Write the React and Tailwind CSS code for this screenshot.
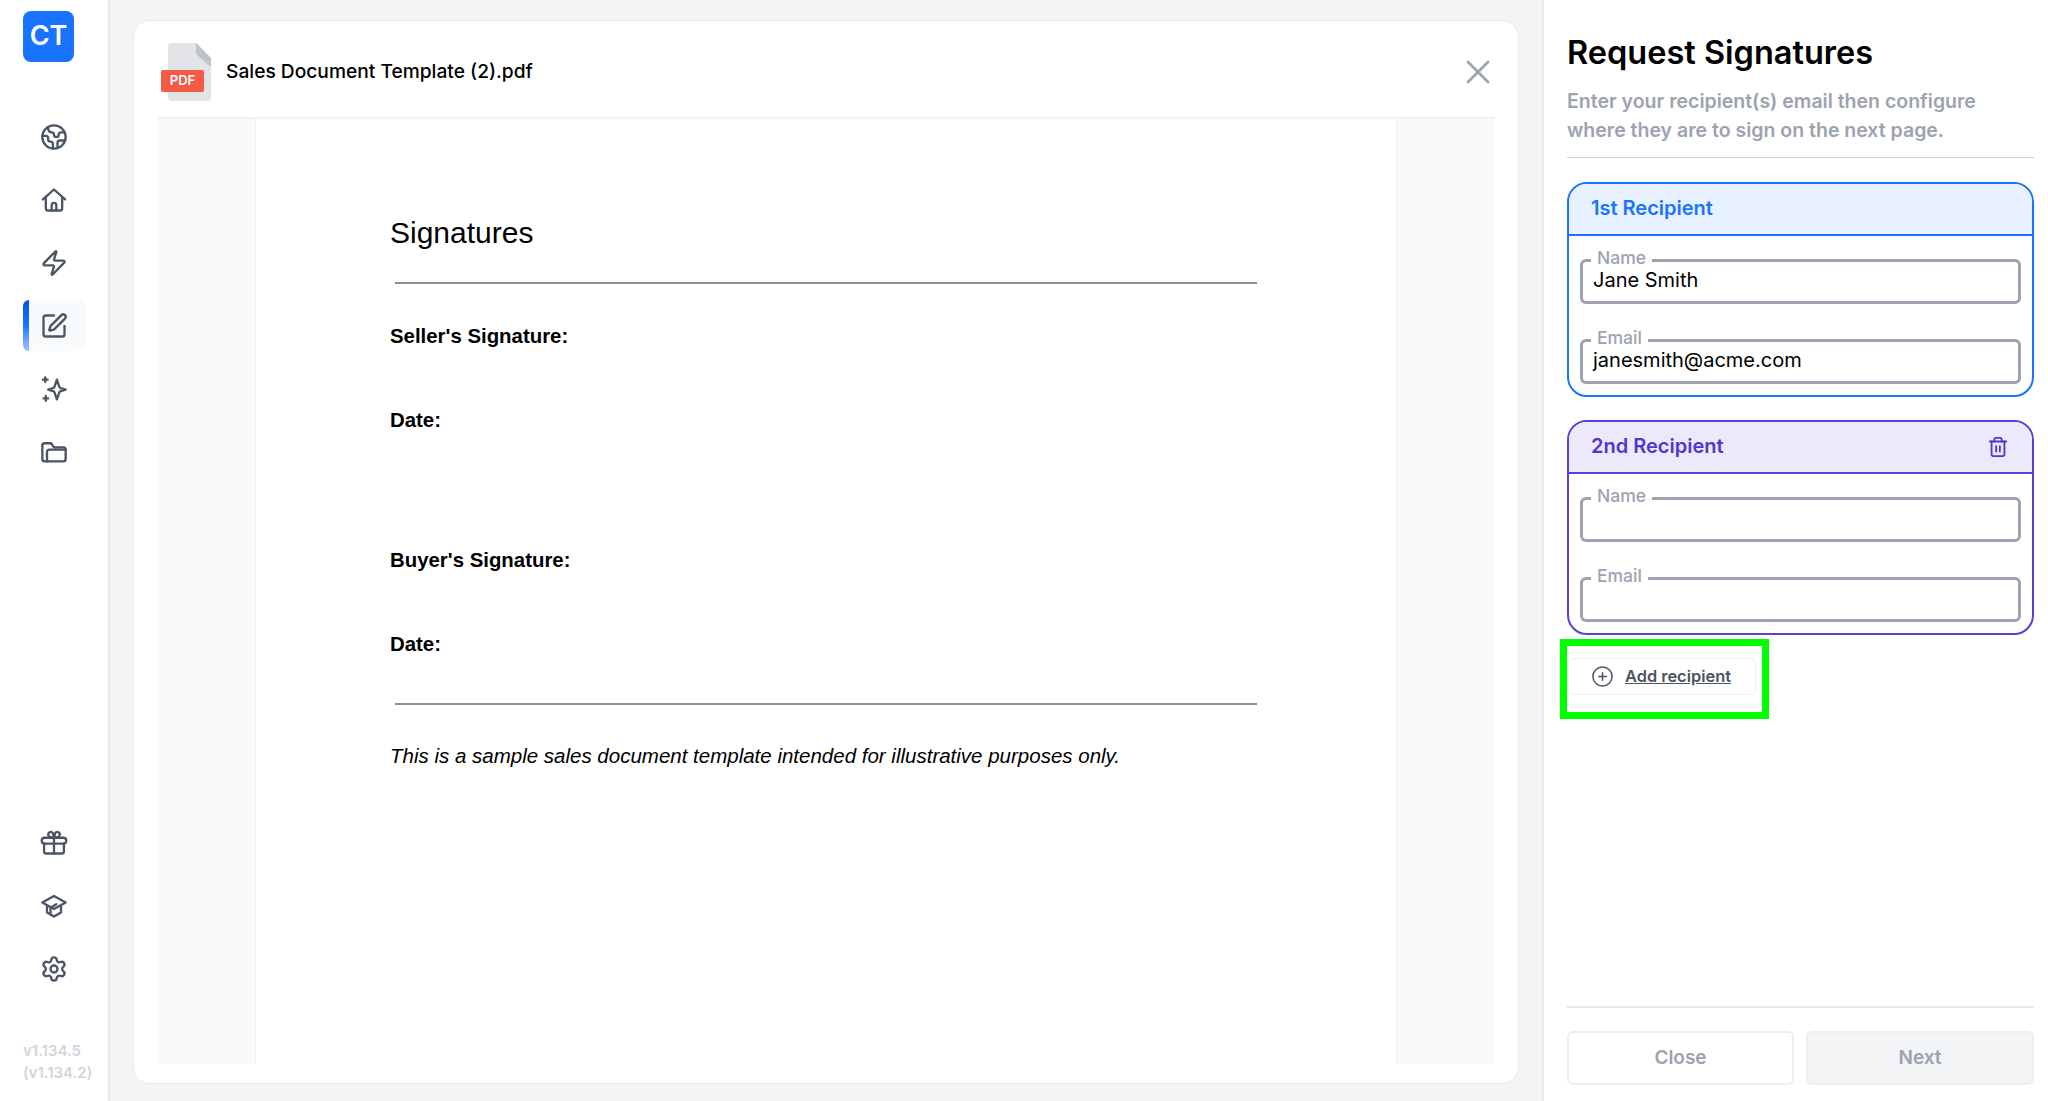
import React from 'react';
import { Earth, Zap, SquarePen, Settings, X, Trash2, CirclePlus } from 'lucide-react';

// icons lucide has no close match for
const svgProps = { fill: 'none', viewBox: '0 0 24 24', stroke: 'currentColor', strokeLinecap: 'round', strokeLinejoin: 'round' };

const HomeIcon = ({ size, strokeWidth, className }) => (
    <svg width={size} height={size} strokeWidth={strokeWidth} className={className} {...svgProps}>
        <path d="M2.500 11.500 12 3l9.500 8.500" />
        <path d="M5 10v9a2 2 0 0 0 2 2h10a2 2 0 0 0 2-2v-9" />
        <path d="M10 21v-4.500a2 2 0 0 1 4 0V21" />
    </svg>
);

const StarsIcon = ({ size, strokeWidth, className }) => (
    <svg width={size} height={size} strokeWidth={strokeWidth} className={className} {...svgProps}>
        <path d="M14.500 4l2 6a2 2 0 0 0 1.300 1.300l4.200 1.200-4.200 1.300a2 2 0 0 0-1.300 1.300l-2 5.900-2-5.900a2 2 0 0 0-1.300-1.300L7 12.500l4.200-1.200a2 2 0 0 0 1.300-1.300z" />
        <path d="M4.500 2v4M2.500 4h4M5 18v4M3 20h4" />
    </svg>
);

const FoldersIcon = ({ size, strokeWidth, className }) => (
    <svg width={size} height={size} strokeWidth={strokeWidth} className={className} {...svgProps}>
        <path d="M2 7v11a2 2 0 0 0 2 2h16a2 2 0 0 0 2-2v-8a2 2 0 0 0-2-2h-8L9.500 4.500H4A2 2 0 0 0 2 6.500z" />
        <path d="M6 20v-8a2 2 0 0 1 2-2h14" />
    </svg>
);

const GiftIcon = ({ size, strokeWidth, className }) => (
    <svg width={size} height={size} strokeWidth={strokeWidth} className={className} {...svgProps}>
        <rect x="1.500" y="7.500" width="21" height="5" rx="2.500" />
        <path d="M3.500 12.500V19a2 2 0 0 0 2 2h13a2 2 0 0 0 2-2v-6.500" />
        <path d="M12 7.500V21" />
        <path d="M12 7.500C10 7.500 7 7 7 4.500a2.200 2.200 0 0 1 4-1l1 4 1-4a2.200 2.200 0 0 1 4 1c0 2.500-3 3-5 3" />
    </svg>
);

const CapIcon = ({ size, strokeWidth, className }) => (
    <svg width={size} height={size} strokeWidth={strokeWidth} className={className} {...svgProps}>
        <path d="M12 3.500 22 9l-10 5.500L2 9z" />
        <path d="M6 12v5.500l6 3.500 6-3.500V12" />
        <path d="M9 19v-5.500l5-3" />
    </svg>
);

const topIcons = [Earth, HomeIcon, Zap, SquarePen, StarsIcon, FoldersIcon];
const bottomIcons = [GiftIcon, CapIcon, Settings];

const NavIcon = ({ icon: Icon, active }) => (
    <div className={`relative flex h-[51px] w-[63px] items-center justify-center rounded-lg ${active ? 'bg-[#f9fafb]' : ''}`}>
        {active && <span className="absolute inset-y-0 left-0 w-[6px] rounded-l-lg bg-gradient-to-b from-[#0f52e0] via-[#1a73ff] to-[#9cc3ff]" />}
        <Icon size={28} strokeWidth={2} className="-ml-[1px] text-[#4b5563]" />
    </div>
);

const Field = ({ label, value, className = '' }) => (
    <fieldset className={`h-[51px] rounded-md border-[3px] border-[#9ca3af] pl-[8px] ${className}`}>
        <legend className="px-[6px] text-[17.5px] leading-[14px] font-medium text-[#9ca3af]">
            <span className="relative -top-[2px]">{label}</span>
        </legend>
        <div className="ml-[2px] text-[20px] leading-[26px] text-black">{value}</div>
    </fieldset>
);

const RecipientCard = ({ title, name, email, border, head, text, trash }) => (
    <section className={`mb-[23px] h-[215px] overflow-hidden rounded-[20px] border-2 ${border}`}>
        <div className={`flex h-[52px] items-center justify-between border-b-2 pb-[3px] pl-[22px] pr-[23px] ${border} ${head}`}>
            <h3 className={`text-[20px] font-semibold ${text}`}>{title}</h3>
            {trash && <Trash2 size={22} className={`mt-[2px] ${text}`} />}
        </div>
        <div className="px-[11px] pt-[17px]">
            <Field label="Name" value={name} />
            <Field label="Email" value={email} className="mt-[29px]" />
        </div>
    </section>
);

const App = () => {
    return (
        <div className="flex h-[1101px] w-[2048px] overflow-hidden bg-[#f3f4f6] font-['Inter',sans-serif]">
            {/* sidebar */}
            <aside className="flex w-[110px] shrink-0 flex-col border-r-2 border-[#e9eaec] bg-white pl-[23px]">
                <div className="mt-[11px] flex h-[51px] w-[51px] items-center justify-center rounded-lg bg-[#1a73ff] text-[27px] font-semibold text-white">CT</div>
                <nav className="mt-[49px] flex flex-col gap-[12px]">
                    {topIcons.map((Icon, i) => <NavIcon key={i} icon={Icon} active={i === 3} />)}
                </nav>
                <nav className="mt-auto flex flex-col gap-[12px]">
                    {bottomIcons.map((Icon, i) => <NavIcon key={i} icon={Icon} />)}
                </nav>
                <div className="mt-[46px] mb-[17px] text-[15px] leading-[22px] font-semibold text-[#d1d5db]">
                    <div>v1.134.5</div>
                    <div>(v1.134.2)</div>
                </div>
            </aside>

            {/* document */}
            <main className="flex flex-1 flex-col px-[23px] pt-[20px] pb-[17px]">
                <div className="flex flex-1 flex-col rounded-2xl border border-[#e9eaec] bg-white px-[23px] pb-[19px]">
                    <header className="flex h-[96px] shrink-0 items-center justify-between pt-[5px]">
                        <div className="ml-[4px] flex items-center">
                            <div className="relative h-[58px] w-[50px]">
                                <svg width="43" height="58" viewBox="0 0 43 58" className="absolute right-0 top-0">
                                    <path d="M3 0h25l15 15v39a4 4 0 0 1-4 4H4a4 4 0 0 1-4-4V3a3 3 0 0 1 3-3z" fill="#e2e4e7" />
                                    <path d="M28 0l15 15v9L28 11z" fill="#bcc3cd" />
                                </svg>
                                <span className="absolute left-0 top-[27px] flex h-[22px] w-[43px] items-center justify-center rounded-[2px] bg-[#f55a47] text-[13px] font-semibold text-white">PDF</span>
                            </div>
                            <span className="ml-[15px] text-[19.2px] font-medium text-black">Sales Document Template (2).pdf</span>
                        </div>
                        <X size={40} strokeWidth={1.6} className="-mr-[3px] text-[#9ca3af]" />
                    </header>
                    <div className="flex flex-1 bg-[#f9fafb] px-[98px] shadow-[inset_0_3px_3px_-2px_#e5e7eb]">
                        <div className="flex-1 border-x border-[#eceef0] bg-white pl-[134px] pr-[139px] pt-[96px] font-['Liberation_Sans',sans-serif] text-black shadow-[inset_0_3px_3px_-2px_#e5e7eb]">
                            <h1 className="text-[30px] leading-[40px]">Signatures</h1>
                            <hr className="mt-[29px] ml-[5px] border-t-2 border-[#8e8e8e]" />
                            <p className="mt-[38px] text-[20.4px] font-bold leading-[28px]">Seller's Signature:</p>
                            <p className="mt-[56px] text-[20.4px] font-bold leading-[28px]">Date:</p>
                            <p className="mt-[112px] text-[20.4px] font-bold leading-[28px]">Buyer's Signature:</p>
                            <p className="mt-[56px] text-[20.4px] font-bold leading-[28px]">Date:</p>
                            <hr className="mt-[45px] ml-[5px] border-t-2 border-[#8e8e8e]" />
                            <p className="mt-[37px] text-[20.5px] italic leading-[28px]">This is a sample sales document template intended for illustrative purposes only.</p>
                        </div>
                    </div>
                </div>
            </main>

            {/* right panel */}
            <aside className="flex w-[506px] shrink-0 flex-col border-l-2 border-[#e9eaec] bg-white pl-[23px] pr-[14px]">
                <h2 className="mt-[31px] text-[32.5px] leading-[44px] font-semibold text-black">Request Signatures</h2>
                <p className="mt-[12px] text-[19.5px] leading-[29px] font-semibold text-[#9ca3af]">Enter your recipient(s) email then configure where they are to sign on the next page.</p>
                <hr className="mt-[12px] mb-[24px] border-[#d1d5db]" />
                <RecipientCard title="1st Recipient" name="Jane Smith" email="janesmith@acme.com" border="border-[#1a73ff]" head="bg-[#e8f1ff]" text="text-[#1a73ff]" />
                <RecipientCard title="2nd Recipient" border="border-[#5b3fd6]" head="bg-[#ede9fb]" text="text-[#4f35d2]" trash />
                <div className="relative -mt-[19px]">
                    <div className="absolute -left-[7px] top-0 h-[80px] w-[209px] border-[7px] border-[#00ff00]" />
                    <button className="relative mt-[19px] flex h-[37px] w-[189px] items-center rounded-md border border-[#eceef0] pl-[23px] text-[#4b5563]">
                        <CirclePlus size={23} strokeWidth={1.6} />
                        <span className="ml-[11px] text-[16.4px] font-semibold underline">Add recipient</span>
                    </button>
                </div>
                <div className="mt-auto mb-[16px] border-t-2 border-[#e5e7eb] pt-[23px]">
                    <div className="flex gap-[12px]">
                        <button className="h-[54px] w-[227px] rounded-md border-2 border-[#eceef0] text-[19px] font-semibold text-[#9ca3af]">Close</button>
                        <button className="h-[54px] flex-1 rounded-md border-2 border-[#eceef0] bg-[#f3f4f6] text-[19px] font-semibold text-[#9ca3af]">Next</button>
                    </div>
                </div>
            </aside>
        </div>
    );
};

export default App;
